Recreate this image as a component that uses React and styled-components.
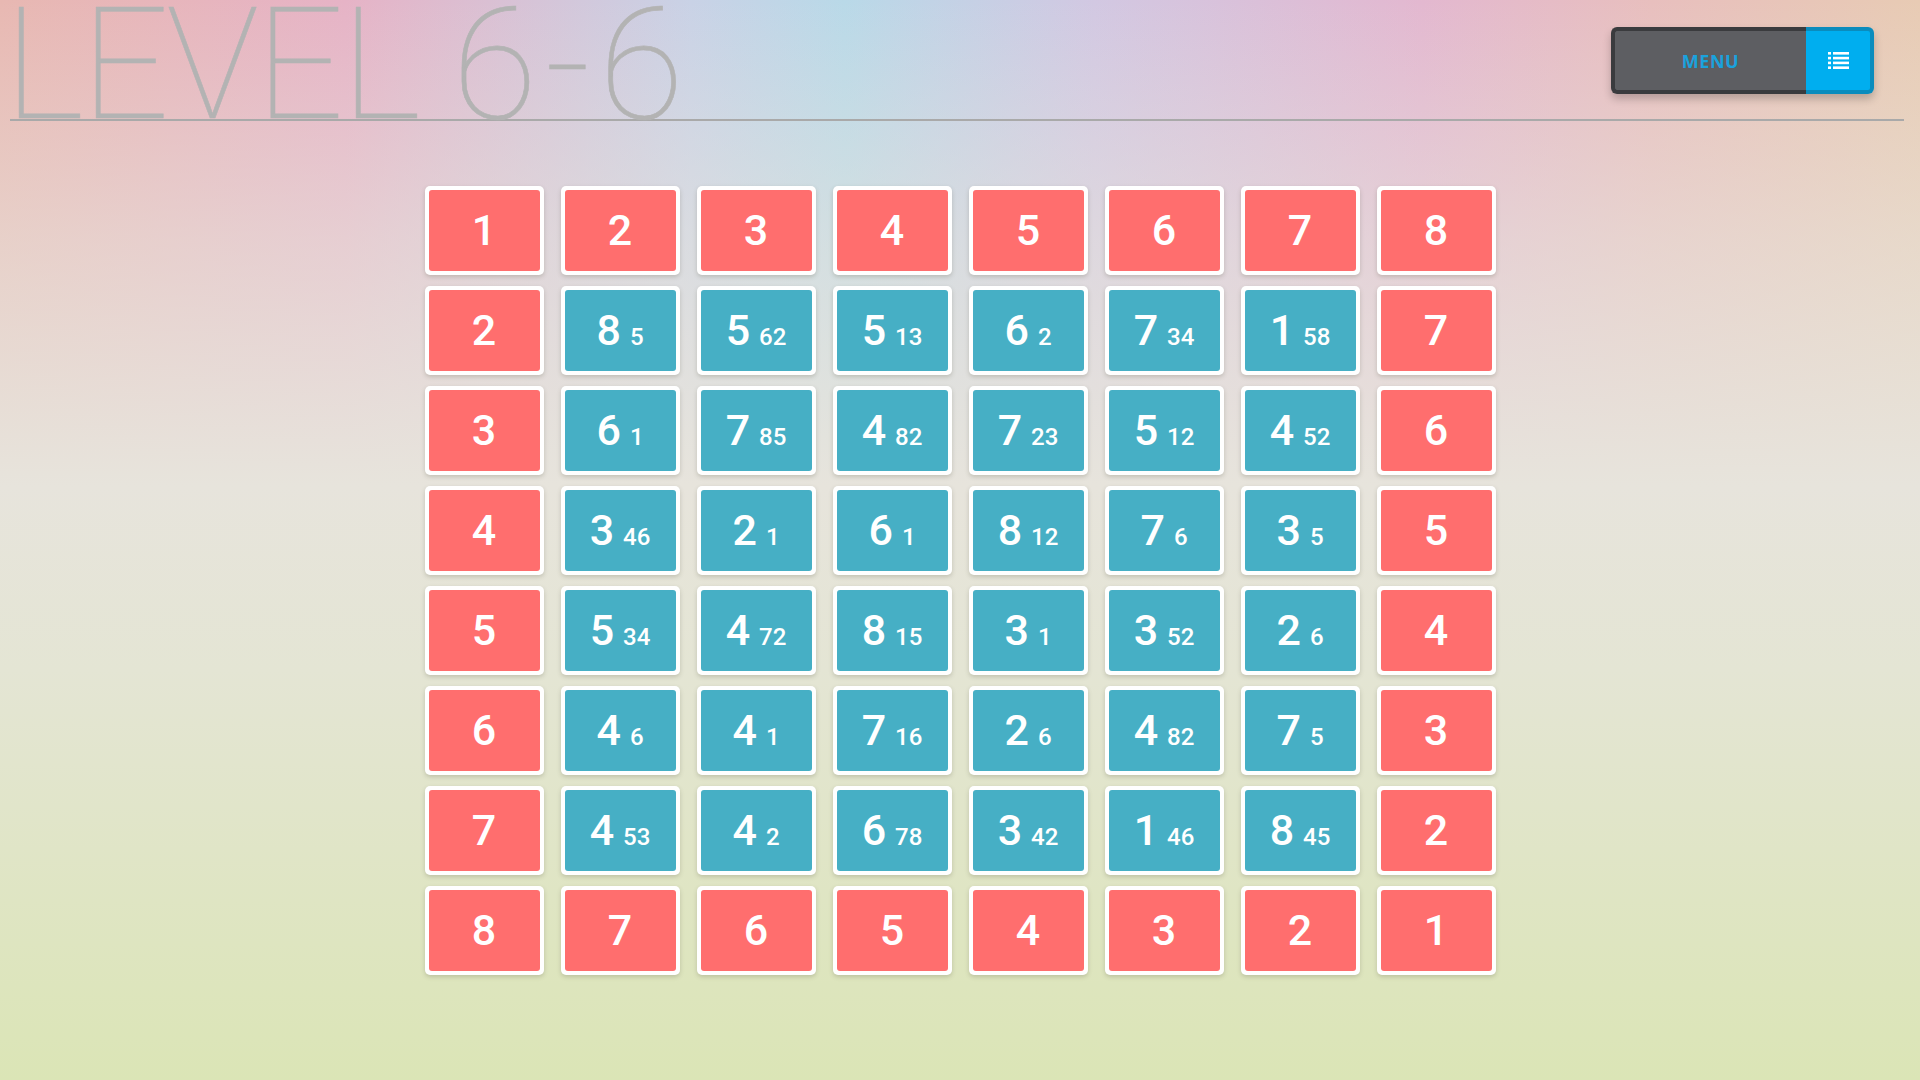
import React from 'react';
import styled, { createGlobalStyle } from 'styled-components';

const GlobalStyle = createGlobalStyle`
  html, body {
    margin: 0;
    padding: 0;
    height: 100%;
  }

  body {
    min-height: 1080px;
    overflow: hidden;
    font-family: 'Roboto', 'Noto Sans', sans-serif;
    background:
      linear-gradient(180deg, rgba(231, 228, 220, 0) 0%, rgba(231, 228, 220, 0.55) 22%, #e7e4dc 45%, #e4e5d4 62%, #dbe5b6 100%),
      linear-gradient(90deg, #e8b8b2 0%, #e6b3c6 18%, #c9d2e6 36%, #b9d9e8 44%, #d2c8e2 57%, #e3b8d0 74%, #e8bfbe 86%, #e8cbb4 100%);
  }
`;

const Page = styled.div`
  width: 1920px;
  height: 1080px;
  display: flex;
  flex-direction: column;
`;

const Header = styled.header`
  height: 119px;
  margin: 0 16px 0 10px;
  display: flex;
  justify-content: space-between;
  align-items: flex-end;
  border-bottom: 2px solid #a9a9a9;
`;

const Title = styled.h1`
  margin: 0 0 -24px -6px;
  font-family: 'Roboto', 'Lato', sans-serif;
  font-weight: 100;
  font-size: 155px;
  line-height: 155px;
  letter-spacing: -3px;
  color: #b3b3b3;
  white-space: nowrap;
  -webkit-text-stroke: 0.6px #b3b3b3;
`;

const Level = styled.span`
  letter-spacing: 8px;
`;

const MenuButton = styled.button`
  align-self: flex-start;
  margin: 27px 30px 0 0;
  padding: 0;
  height: 67px;
  display: flex;
  border: none;
  border-radius: 6px;
  background: transparent;
  box-shadow: 0 5px 9px rgba(0, 0, 0, 0.22);
  cursor: pointer;
`;

const MenuLabel = styled.span`
  width: 191px;
  display: flex;
  align-items: center;
  justify-content: center;
  background: #5d5e62;
  border: 4px solid #3a3b3e;
  border-right: none;
  border-radius: 6px 0 0 6px;
  color: #1aa2dd;
  font-family: 'Noto Sans', 'DejaVu Sans', sans-serif;
  font-weight: 700;
  font-size: 18px;
  letter-spacing: 0.5px;
`;

const MenuIcon = styled.span`
  width: 64px;
  display: flex;
  align-items: center;
  justify-content: center;
  background: #00aeef;
  border: 4px solid #0a8cbd;
  border-left: none;
  border-radius: 0 6px 6px 0;
`;

const Board = styled.main`
  margin: 65px auto 0;
  display: grid;
  grid-template-columns: repeat(8, 119px);
  grid-auto-rows: 89px;
  column-gap: 17px;
  row-gap: 11px;
`;

const Tile = styled.div`
  padding: 4px;
  background: #ffffff;
  border-radius: 5px;
  box-shadow: 0 2px 4px rgba(90, 90, 70, 0.25);
  display: flex;
`;

const Face = styled.div`
  flex: 1;
  border-radius: 3px;
  background: ${({ $kind }) => ($kind === 'edge' ? '#ff6e6e' : '#46afc5')};
  display: flex;
  align-items: baseline;
  justify-content: center;
  padding-top: 18px;
  box-sizing: border-box;
  color: #ffffff;
  font-family: 'Roboto', 'Noto Sans', sans-serif;
  font-weight: 500;
`;

const Value = styled.span`
  font-size: 43px;
  line-height: 44px;
`;

const Hint = styled.span`
  margin-left: 9px;
  font-size: 24px;
  line-height: 24px;
`;

const ListIcon = () => (
  <svg width="21" height="17" viewBox="0 0 21 17" fill="#ffffff">
    {[0, 4.8, 9.6, 14.4].map((y) => (
      <g key={y}>
        <rect x="0" y={y} width="3" height="2.6" />
        <rect x="5" y={y} width="16" height="2.6" />
      </g>
    ))}
  </svg>
);

const inner = [
  [[8, 5], [5, 62], [5, 13], [6, 2], [7, 34], [1, 58]],
  [[6, 1], [7, 85], [4, 82], [7, 23], [5, 12], [4, 52]],
  [[3, 46], [2, 1], [6, 1], [8, 12], [7, 6], [3, 5]],
  [[5, 34], [4, 72], [8, 15], [3, 1], [3, 52], [2, 6]],
  [[4, 6], [4, 1], [7, 16], [2, 6], [4, 82], [7, 5]],
  [[4, 53], [4, 2], [6, 78], [3, 42], [1, 46], [8, 45]],
];

const buildRows = () => {
  const rows = [];
  rows.push([1, 2, 3, 4, 5, 6, 7, 8].map((v) => ({ kind: 'edge', value: v })));
  inner.forEach((cells, i) => {
    rows.push([
      { kind: 'edge', value: i + 2 },
      ...cells.map(([v, h]) => ({ kind: 'cell', value: v, hint: h })),
      { kind: 'edge', value: 7 - i },
    ]);
  });
  rows.push([8, 7, 6, 5, 4, 3, 2, 1].map((v) => ({ kind: 'edge', value: v })));
  return rows;
};

const rows = buildRows();

const App = () => (
  <Page>
    <GlobalStyle />
    <Header>
      <Title>
        LEVEL <Level>6-6</Level>
      </Title>
      <MenuButton>
        <MenuLabel>MENU</MenuLabel>
        <MenuIcon>
          <ListIcon />
        </MenuIcon>
      </MenuButton>
    </Header>
    <Board>
      {rows.flat().map((cell, i) => (
        <Tile key={i}>
          <Face $kind={cell.kind}>
            <Value>{cell.value}</Value>
            {cell.hint !== undefined && <Hint>{cell.hint}</Hint>}
          </Face>
        </Tile>
      ))}
    </Board>
  </Page>
);

export default App;
